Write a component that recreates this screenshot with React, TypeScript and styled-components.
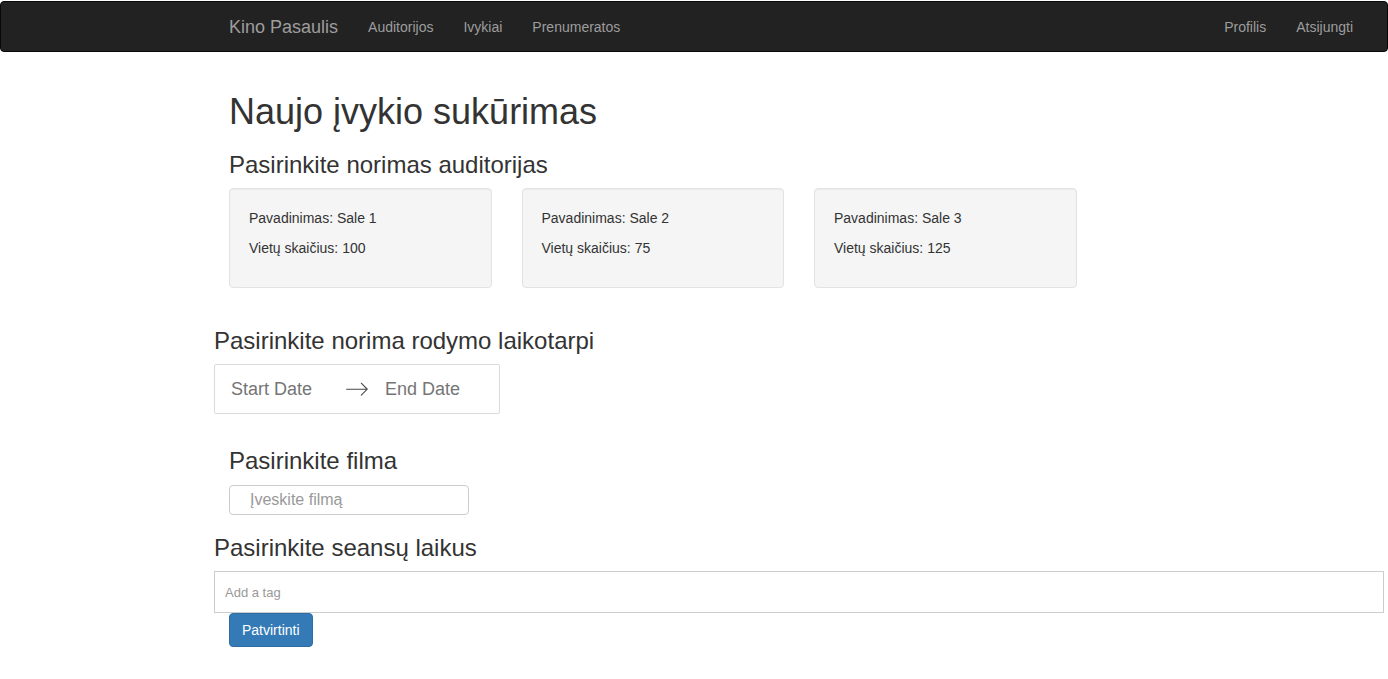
import React from "react";
import styled, { createGlobalStyle } from "styled-components";

const Global = createGlobalStyle`
  html, body { margin: 0; padding: 0; background: #fff; }
  body {
    font-family: "Liberation Sans", Arial, Helvetica, sans-serif;
    font-size: 14px;
    line-height: 1.42857;
    color: #333;
  }
  * { box-sizing: border-box; }
`;

const NavBar = styled.nav`
  margin: 1px 0 20px;
  height: 51px;
  background: #222;
  border: 1px solid #080808;
  border-radius: 4px;
  display: flex;
  align-items: center;
  padding: 0 19px 0 213px;
`;

const Brand = styled.a`
  font-size: 18px;
  line-height: 20px;
  padding: 15px;
  color: #9d9d9d;
  text-decoration: none;
`;

const NavList = styled.ul<{ $right?: boolean }>`
  list-style: none;
  margin: 0;
  padding: 0;
  display: flex;
  margin-left: ${(p) => (p.$right ? "auto" : "0")};
`;

const NavLink = styled.a`
  display: block;
  padding: 15px;
  line-height: 20px;
  font-size: 14px;
  color: #9d9d9d;
  text-decoration: none;
`;

const Page = styled.main`
  display: flow-root;
  padding: 0 4px 0 214px;
`;

const Indented = styled.div`
  padding-left: 15px;
`;

const Title = styled.h1`
  font-size: 36px;
  font-weight: 500;
  line-height: 1.1;
  margin: 20px 0 10px;
`;

const Heading = styled.h3<{ $top?: number }>`
  font-size: 24px;
  font-weight: 500;
  line-height: 1.1;
  margin: ${(p) => p.$top ?? 20}px 0 10px;
`;

const Cards = styled.div`
  display: grid;
  grid-template-columns: repeat(3, 262.5px);
  column-gap: 30px;
`;

const Well = styled.div`
  background: #f5f5f5;
  border: 1px solid #e3e3e3;
  border-radius: 4px;
  box-shadow: inset 0 1px 1px rgba(0, 0, 0, 0.05);
  padding: 19px;
  margin-bottom: 20px;
`;

const Line = styled.p`
  margin: 0 0 10px;
  line-height: 20px;
`;

const DateRange = styled.div`
  display: inline-flex;
  align-items: center;
  border: 1px solid #dbdbdb;
  border-radius: 2px;
  background: #fff;
  height: 50px;
`;

const DateInput = styled.div`
  width: 130px;
  padding-left: 16px;
  font-size: 18px;
  line-height: 24px;
  color: #757575;
`;

const ArrowBox = styled.div`
  width: 24px;
  height: 24px;
  display: flex;
`;

const FilmInput = styled.input`
  display: block;
  width: 240px;
  height: 30px;
  border: 1px solid #ccc;
  border-radius: 4px;
  padding: 0 0 0 20px;
  font-family: "Liberation Sans", Arial, sans-serif;
  font-size: 16px;
  color: #555;
  margin: 0 0 20px;
  &::placeholder { color: #999; }
`;

const TagBox = styled.div`
  border: 1px solid #ccc;
  background: #fff;
  height: 42px;
  padding: 5px;
  display: flex;
  align-items: center;
`;

const TagInput = styled.input`
  border: 0;
  outline: none;
  background: transparent;
  font-family: "Liberation Sans", Arial, sans-serif;
  font-size: 13px;
  padding: 5px;
  width: 80px;
  color: #777;
  &::placeholder { color: #999; }
`;

const Button = styled.button`
  margin-top: 0;
  background: #337ab7;
  border: 1px solid #2e6da4;
  border-radius: 4px;
  color: #fff;
  font-family: "Liberation Sans", Arial, sans-serif;
  font-size: 14px;
  line-height: 20px;
  padding: 6px 12px;
  cursor: pointer;
`;

const rooms = [
  { name: "Sale 1", seats: 100 },
  { name: "Sale 2", seats: 75 },
  { name: "Sale 3", seats: 125 },
];

export default function App() {
  return (
    <>
      <Global />
      <NavBar>
        <Brand href="#">Kino Pasaulis</Brand>
        <NavList>
          <li><NavLink href="#">Auditorijos</NavLink></li>
          <li><NavLink href="#">Ivykiai</NavLink></li>
          <li><NavLink href="#">Prenumeratos</NavLink></li>
        </NavList>
        <NavList $right>
          <li><NavLink href="#">Profilis</NavLink></li>
          <li><NavLink href="#">Atsijungti</NavLink></li>
        </NavList>
      </NavBar>
      <Page>
        <Indented>
          <Title>Naujo įvykio sukūrimas</Title>
          <Heading>Pasirinkite norimas auditorijas</Heading>
          <Cards>
            {rooms.map((r) => (
              <Well key={r.name}>
                <Line>Pavadinimas: {r.name}</Line>
                <Line>Vietų skaičius: {r.seats}</Line>
              </Well>
            ))}
          </Cards>
        </Indented>
        <Heading $top={20}>Pasirinkite norima rodymo laikotarpi</Heading>
        <DateRange>
          <DateInput>Start Date</DateInput>
          <ArrowBox>
            <svg viewBox="0 0 1000 1000" width="24" height="24" fill="#484848">
              <path d="M694.4 242.4l249.1 249.1c11 11 11 21 0 32L694.4 772.7c-5 5-10 7-16 7s-11-2-16-7c-11-11-11-21 0-32l210.1-210.1H67.1c-13 0-23-10-23-23s10-23 23-23h805.4L662.4 274.5c-21-21.1 11-53.1 32-32.1z" />
            </svg>
          </ArrowBox>
          <DateInput>End Date</DateInput>
        </DateRange>
        <Indented>
          <Heading $top={34}>Pasirinkite filma</Heading>
          <FilmInput placeholder="Įveskite filmą" />
        </Indented>
        <Heading $top={0}>Pasirinkite seansų laikus</Heading>
        <TagBox>
          <TagInput placeholder="Add a tag" />
        </TagBox>
        <Indented>
          <Button>Patvirtinti</Button>
        </Indented>
      </Page>
    </>
  );
}
